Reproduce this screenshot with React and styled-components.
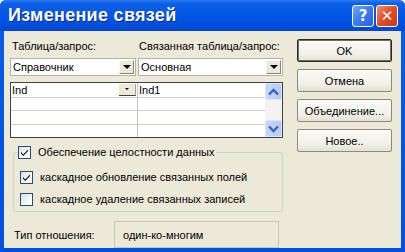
import React from "react";
import styled, { createGlobalStyle } from "styled-components";

const GlobalStyle = createGlobalStyle`
  html, body { margin: 0; padding: 0; background: #ffffff; }
  body { font-family: "Liberation Sans", Arial, sans-serif; }
`;

const Window = styled.div`
  width: 405px;
  height: 252px;
  box-sizing: border-box;
  background: linear-gradient(180deg, #0a5ce8 0%, #0050e0 100%);
  display: flex;
  flex-direction: column;
  padding: 0 4px 4px 4px;
  border-radius: 6px 6px 0 0;
`;

const TitleBar = styled.div`
  height: 31px;
  display: flex;
  align-items: center;
  background: linear-gradient(180deg, #2d7bf2 0%, #0c5fe6 12%, #0055e5 60%, #0048d4 100%);
  margin: 0 -4px;
  padding: 0 7px 0 8px;
  border-radius: 6px 6px 0 0;
`;

const Title = styled.div`
  flex: 1;
  color: #ffffff;
  font-family: "Liberation Sans", Arial, sans-serif;
  font-weight: bold;
  font-size: 18px;
  letter-spacing: 0.3px;
  text-shadow: 1px 1px 0 #0a2a8a;
`;

const CapButton = styled.div`
  width: 22px;
  height: 22px;
  margin-left: 2px;
  box-sizing: border-box;
  border: 1px solid #ffffff;
  border-radius: 3px;
  display: flex;
  align-items: center;
  justify-content: center;
  color: #ffffff;
  font-family: "DejaVu Sans", sans-serif;
  font-weight: bold;
  font-size: 15px;
  background: ${p => p.close
    ? "linear-gradient(135deg, #f0906a 0%, #e0512a 45%, #c8381a 100%)"
    : "linear-gradient(135deg, #7aa6ff 0%, #3c7df3 45%, #2660dc 100%)"};
`;

const Body = styled.div`
  flex: 1;
  background: #ece9d8;
  display: flex;
  padding: 5px 0 0 6px;
  gap: 14px;
  font-family: "Liberation Sans", Arial, sans-serif;
  font-size: 11px;
  color: #000;
`;

const LeftPane = styled.div`
  width: 273px;
  display: flex;
  flex-direction: column;
`;

const Row = styled.div`
  display: flex;
  gap: ${p => p.gap || 0}px;
`;

const Label = styled.div`
  width: ${p => p.w}px;
  height: 15px;
  line-height: 15px;
  padding-left: 2px;
  margin-top: 3px;
  white-space: nowrap;
`;

const Combo = styled.div`
  width: ${p => p.w}px;
  height: 18px;
  box-sizing: border-box;
  background: #fff;
  border: 1px solid #b5b2a5;
  display: flex;
  align-items: center;
  margin-top: 4px;
`;

const ComboText = styled.div`
  flex: 1;
  padding-left: 2px;
`;

const DropBtn = styled.div`
  width: 15px;
  height: 14px;
  margin-right: 1px;
  background: #ece9d8;
  border: 1px solid #f8f7f0;
  border-right-color: #8a877a;
  border-bottom-color: #8a877a;
  box-sizing: border-box;
  display: flex;
  align-items: center;
  justify-content: center;
`;

const Arrow = styled.div`
  width: 0;
  height: 0;
  border-left: ${p => p.s}px solid transparent;
  border-right: ${p => p.s}px solid transparent;
  border-top: ${p => p.s}px solid #000;
`;

const Grid = styled.div`
  margin-top: 6px;
  height: 56px;
  box-sizing: border-box;
  border: 1px solid #404040;
  background: #fff;
  display: flex;
`;

const Cols = styled.div`
  flex: 1;
  display: flex;
  flex-direction: column;
`;

const GridRow = styled.div`
  height: ${p => p.h}px;
  display: flex;
  border-bottom: ${p => (p.last ? "none" : "1px solid #d4d0c8")};
`;

const Cell = styled.div`
  width: ${p => p.w}px;
  flex: ${p => (p.w ? "none" : 1)};
  display: flex;
  align-items: center;
  padding-left: 1px;
  border-right: ${p => (p.w ? "1px solid #c8c5bc" : "none")};
  box-sizing: border-box;
`;

const CellText = styled.div`
  flex: 1;
`;

const MiniDrop = styled.div`
  width: 17px;
  height: 12px;
  margin-right: 1px;
  background: #ece9d8;
  border-bottom: 1px solid #404040;
  border-right: 1px solid #a0a0a0;
  box-sizing: border-box;
  display: flex;
  align-items: center;
  justify-content: center;
`;

const ScrollBar = styled.div`
  width: 17px;
  display: flex;
  flex-direction: column;
  justify-content: space-between;
  background: #f4f3ee;
`;

const ScrollBtn = styled.div`
  height: 17px;
  border-radius: 2px;
  background: linear-gradient(90deg, #c7d7fb 0%, #b7cbf6 100%);
  border: 1px solid #dbe5fd;
  box-sizing: border-box;
  display: flex;
  align-items: center;
  justify-content: center;
`;

const GroupBox = styled.fieldset`
  margin: 6px 0 0 3px;
  padding: 0 0 1px 6px;
  width: 270px;
  box-sizing: border-box;
  border: 1px solid #d0d0bf;
  border-radius: 3px;
`;

const Legend = styled.legend`
  padding: 0 2px 0 0;
  margin-left: -2px;
  display: flex;
  align-items: center;
  gap: 7px;
  height: 16px;
`;

const CheckRow = styled.div`
  display: flex;
  align-items: center;
  gap: 7px;
  height: 22px;
  margin-top: ${p => p.mt || 0}px;
`;

const Box = styled.div`
  width: 13px;
  height: 13px;
  box-sizing: border-box;
  border: 1px solid #1c5180;
  background: linear-gradient(135deg, #dcdcd7 0%, #ffffff 80%);
  display: flex;
  align-items: center;
  justify-content: center;
`;

const Footer = styled.div`
  display: flex;
  align-items: center;
  margin-top: 9px;
  padding-left: 4px;
`;

const FooterLabel = styled.div`
  width: 100px;
`;

const ValueBox = styled.div`
  width: 165px;
  height: 27px;
  box-sizing: border-box;
  border: 1px solid #c9c6b5;
  display: flex;
  align-items: center;
  padding-left: 8px;
`;

const RightPane = styled.div`
  display: flex;
  flex-direction: column;
  padding-top: 3px;
`;

const Button = styled.div`
  width: 95px;
  height: 23px;
  box-sizing: border-box;
  margin-bottom: ${p => p.mb}px;
  border: 1px solid ${p => (p.def ? "#2b2b2b" : "#8c8a80")};
  border-radius: 2px;
  background: linear-gradient(180deg, #fbfbf8 0%, #f1efe6 70%, #e3e0d2 100%);
  display: flex;
  align-items: center;
  justify-content: center;
  box-shadow: ${p => (p.def ? "inset 0 0 0 1px #6f6d64" : "none")};
`;

const Check = () => (
  <svg width="9" height="9" viewBox="0 0 9 9">
    <path d="M1 4 L3.3 6.5 L8 1.5 L8 3 L3.3 8 L1 5.5 Z" fill="#000" />
  </svg>
);

const Chevron = ({ up }) => (
  <svg width="11" height="8" viewBox="0 0 11 8">
    <path
      d={up ? "M1 6.5 L5.5 2 L10 6.5" : "M1 1.5 L5.5 6 L10 1.5"}
      stroke="#3d62c6"
      strokeWidth="2.4"
      fill="none"
    />
  </svg>
);

const App = () => (
  <>
    <GlobalStyle />
    <Window>
      <TitleBar>
        <Title>Изменение связей</Title>
        <CapButton>?</CapButton>
        <CapButton close>✕</CapButton>
      </TitleBar>
      <Body>
        <LeftPane>
          <Row>
            <Label w={126}>Таблица/запрос:</Label>
            <Label w={145}>Связанная таблица/запрос:</Label>
          </Row>
          <Row gap={2}>
            <Combo w={126}>
              <ComboText>Справочник</ComboText>
              <DropBtn><Arrow s={4} /></DropBtn>
            </Combo>
            <Combo w={145}>
              <ComboText>Основная</ComboText>
              <DropBtn><Arrow s={4} /></DropBtn>
            </Combo>
          </Row>
          <Grid>
            <Cols>
              <GridRow h={14}>
                <Cell w={127}>
                  <CellText>Ind</CellText>
                  <MiniDrop><Arrow s={2} /></MiniDrop>
                </Cell>
                <Cell><CellText>Ind1</CellText></Cell>
              </GridRow>
              <GridRow h={13}><Cell w={127} /><Cell /></GridRow>
              <GridRow h={13}><Cell w={127} /><Cell /></GridRow>
              <GridRow h={12} last><Cell w={127} /><Cell /></GridRow>
            </Cols>
            <ScrollBar>
              <ScrollBtn><Chevron up /></ScrollBtn>
              <ScrollBtn><Chevron /></ScrollBtn>
            </ScrollBar>
          </Grid>
          <GroupBox>
            <Legend>
              <Box><Check /></Box>
              Обеспечение целостности данных
            </Legend>
            <CheckRow mt={6}>
              <Box><Check /></Box>
              каскадное обновление связанных полей
            </CheckRow>
            <CheckRow>
              <Box />
              каскадное удаление связанных записей
            </CheckRow>
          </GroupBox>
          <Footer>
            <FooterLabel>Тип отношения:</FooterLabel>
            <ValueBox>один-ко-многим</ValueBox>
          </Footer>
        </LeftPane>
        <RightPane>
          <Button def mb={7}>OK</Button>
          <Button mb={7}>Отмена</Button>
          <Button mb={7}>Объединение...</Button>
          <Button mb={0}>Новое..</Button>
        </RightPane>
      </Body>
    </Window>
  </>
);

export default App;
